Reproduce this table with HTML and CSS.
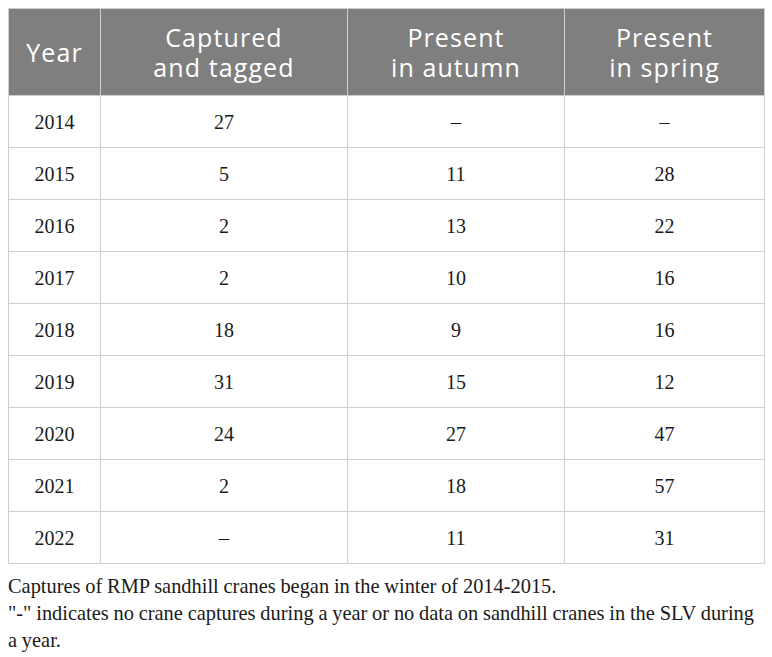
FILE: index.html
```html
<!DOCTYPE html>
<html>
<head>
<meta charset="utf-8">
<link rel="stylesheet" href="styles.css">
</head>
<body>
<div class="wrap">
<table class="data">
  <colgroup>
    <col class="c1"><col class="c2"><col class="c3"><col class="c4">
  </colgroup>
  <thead>
    <tr><th>Year</th><th><span class="ln">Captured</span><span class="ln">and tagged</span></th><th><span class="ln">Present</span><span class="ln">in autumn</span></th><th><span class="ln">Present</span><span class="ln">in spring</span></th></tr>
  </thead>
  <tbody>
    <tr><td>2014</td><td>27</td><td>–</td><td>–</td></tr>
    <tr><td>2015</td><td>5</td><td>11</td><td>28</td></tr>
    <tr><td>2016</td><td>2</td><td>13</td><td>22</td></tr>
    <tr><td>2017</td><td>2</td><td>10</td><td>16</td></tr>
    <tr><td>2018</td><td>18</td><td>9</td><td>16</td></tr>
    <tr><td>2019</td><td>31</td><td>15</td><td>12</td></tr>
    <tr><td>2020</td><td>24</td><td>27</td><td>47</td></tr>
    <tr><td>2021</td><td>2</td><td>18</td><td>57</td></tr>
    <tr><td>2022</td><td>–</td><td>11</td><td>31</td></tr>
  </tbody>
</table>
<div class="notes">
  <p>Captures of RMP sandhill cranes began in the winter of 2014-2015.</p>
  <p>"-" indicates no crane captures during a year or no data on sandhill cranes in the SLV during a year.</p>
</div>
</div>
</body>
</html>
```
FILE: styles.css
```css
html, body {
  margin: 0;
  padding: 0;
  background: #ffffff;
}
.wrap {
  padding: 8px 9px 0 8px;
}
.data {
  border-collapse: collapse;
  width: 756px;
  table-layout: fixed;
}
.c1 { width: 92px; }
.c2 { width: 247px; }
.c3 { width: 217px; }
.c4 { width: 200px; }
.data th {
  background: #7f7f7f;
  color: #ffffff;
  font-family: "Open Sans", sans-serif;
  font-weight: 400;
  font-size: 25px;
  letter-spacing: 1.1px;
  line-height: 30px;
  padding: 13px 4px 13px;
  border: 1px solid #cfcfcf;
  text-align: center;
}
.ln {
  display: block;
}
.data td {
  font-family: "Liberation Serif", serif;
  font-size: 20px;
  line-height: 24px;
  color: #1a1a1a;
  text-align: center;
  height: 52px;
  padding: 0 4px;
  box-sizing: border-box;
  border: 1px solid #cfcfcf;
}
.notes {
  font-family: "Liberation Serif", serif;
  font-size: 20.4px;
  line-height: 27px;
  color: #1a1a1a;
  padding-top: 9px;
  margin-right: -1px;
  word-spacing: -0.3px;
}
.notes p {
  margin: 0;
}
```
